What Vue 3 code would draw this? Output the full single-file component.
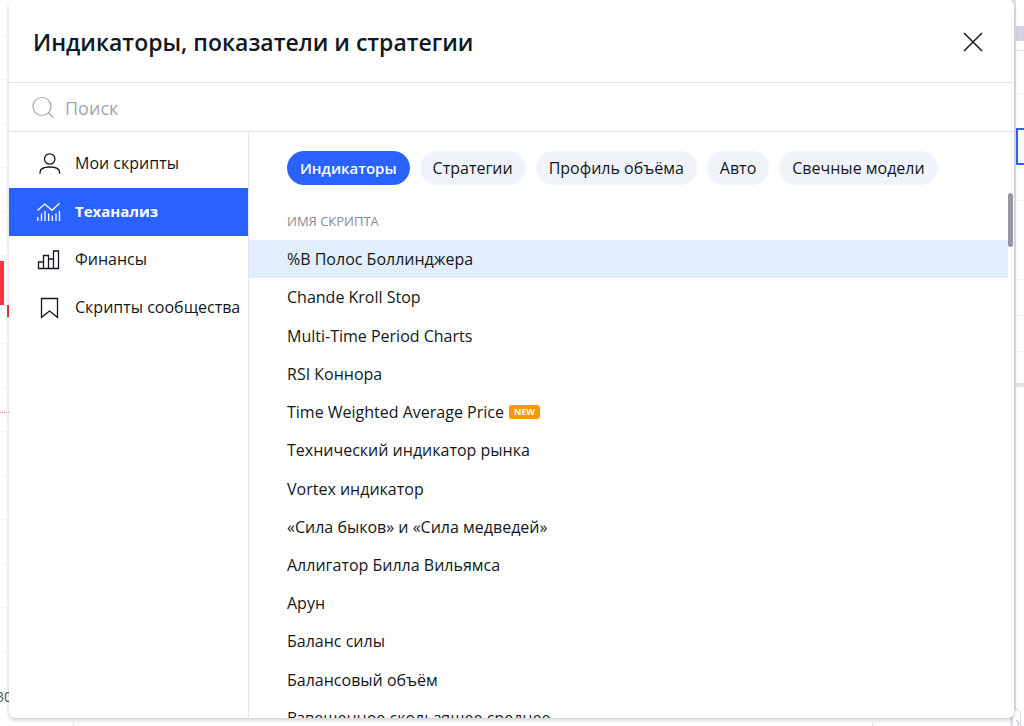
<script setup>
import { ref } from 'vue'

const query = ref('')
const active = ref(1)
const activeTab = ref(0)
const sections = [
  { label: 'Мои скрипты', icon: 'user' },
  { label: 'Теханализ', icon: 'chart' },
  { label: 'Финансы', icon: 'bars' },
  { label: 'Скрипты сообщества', icon: 'bookmark' }
]
const tabs = ['Индикаторы', 'Стратегии', 'Профиль объёма', 'Авто', 'Свечные модели']
const scripts = [
  { name: '%B Полос Боллинджера' },
  { name: 'Chande Kroll Stop' },
  { name: 'Multi-Time Period Charts' },
  { name: 'RSI Коннора' },
  { name: 'Time Weighted Average Price', badge: 'NEW' },
  { name: 'Технический индикатор рынка' },
  { name: 'Vortex индикатор' },
  { name: '«Сила быков» и «Сила медведей»' },
  { name: 'Аллигатор Билла Вильямса' },
  { name: 'Арун' },
  { name: 'Баланс силы' },
  { name: 'Балансовый объём' },
  { name: 'Взвешенное скользящее среднее' }
]
</script>

<template>
  <div class="page">
    <div class="backdrop" aria-hidden="true">
      <span class="candle tall"></span>
      <span class="candle small"></span>
      <span class="price-line"></span>
      <span class="axis-label">30</span>
      <span class="tick tick-a"></span>
      <span class="tick tick-b"></span>
      <div class="panel">
        <span class="toolbar"></span>
        <span class="rule rule-a"></span>
        <span class="rule rule-b"></span>
        <span class="selected"></span>
        <span class="rule rule-c"></span>
        <span class="rule rule-d"></span>
        <span class="rule rule-e"></span>
        <span class="rule rule-f"></span>
        <span class="splitter"></span>
        <span class="handle"></span>
        <svg class="arrow" width="4" height="10" viewBox="0 0 4 10"><path d="M0.500 1l2.500 4-2.500 4" /></svg>
      </div>
    </div>

    <section class="dialog" role="dialog" aria-labelledby="dialog-title">
      <header class="head">
        <h1 id="dialog-title">Индикаторы, показатели и стратегии</h1>
        <button class="close" type="button" aria-label="Закрыть">
          <svg width="20" height="20" viewBox="0 0 20 20"><path d="M1 1l18 18M19 1L1 19" /></svg>
        </button>
      </header>

      <label class="search">
        <svg width="24" height="24" viewBox="0 0 24 24"><circle cx="11" cy="10.500" r="9" /><path d="M17.300 16.800l5 4.700" /></svg>
        <input v-model="query" type="text" placeholder="Поиск" aria-label="Поиск" />
      </label>

      <div class="body">
        <nav class="side">
          <button v-for="(s, i) in sections" :key="s.label" type="button" class="section" :class="{ on: active === i }" @click="active = i">
            <svg width="28" height="28" viewBox="0 0 28 28">
              <template v-if="s.icon === 'user'">
                <circle cx="15.700" cy="10" r="5.200" />
                <path d="M6 24.700v-1c0-3.800 3.300-5.700 9.700-5.700s10 1.900 10 5.700v1" />
              </template>
              <path v-else-if="s.icon === 'chart'" d="M3.500 13.500l7.200-6.500 7.300 6.300 7.500-7M3.800 20v4M7.500 16.500v7.500M11 14v10M14.700 16.500v7.500M18.300 18.500v5.500M22 16.500v7.500M25.500 14v10" />
              <path v-else-if="s.icon === 'bars'" d="M4.500 23.500v-6.500h5v6.500zM9.500 23.500v-13h5v13zM14.500 23.500v-9.500h5v9.500zM19.500 23.500v-17.500h5v17.500z" />
              <path v-else d="M7.500 5.500h16v18.800l-8-6.300-8 6.300z" />
            </svg>
            <span>{{ s.label }}</span>
          </button>
        </nav>

        <main class="content">
          <div class="tabs">
            <button v-for="(t, i) in tabs" :key="t" type="button" class="tab" :class="{ on: activeTab === i }" @click="activeTab = i">{{ t }}</button>
          </div>
          <h2 class="caption">Имя скрипта</h2>
          <ul class="list">
            <li v-for="(s, i) in scripts" :key="s.name" class="row" :class="{ hover: i === 0 }">
              <span>{{ s.name }}</span>
              <span v-if="s.badge" class="badge">{{ s.badge }}</span>
            </li>
          </ul>
          <span class="thumb"></span>
        </main>
      </div>
    </section>
  </div>
</template>

<style>
body {
  margin: 0;
  background: #fff;
}
</style>

<style scoped>
* {
  box-sizing: border-box;
}
.page {
  position: relative;
  display: flex;
  height: 100vh;
  padding: 0 10px 8px 9px;
  overflow: hidden;
  font-family: "Open Sans", "Noto Sans", sans-serif;
  font-size: 16px;
  color: #131722;
}
button {
  margin: 0;
  border: 0;
  background: none;
  font: inherit;
  color: inherit;
  cursor: pointer;
}
svg {
  flex: none;
  fill: none;
  stroke: currentColor;
}
.backdrop {
  position: absolute;
  inset: 0;
  background: repeating-linear-gradient(#fff 0 35px, #f2f3f5 35px 36px, #fff 36px 44px);
}
.backdrop span {
  position: absolute;
}
.candle {
  background: #f7313f;
}
.tall {
  left: 0;
  top: 261px;
  width: 4px;
  height: 44px;
}
.small {
  left: 7px;
  top: 305px;
  width: 2px;
  height: 12px;
}
.price-line {
  left: 0;
  top: 412px;
  width: 9px;
  border-top: 1px dotted #fa8a92;
}
.axis-label {
  left: -4px;
  top: 688px;
  font-size: 14px;
  line-height: 18px;
  color: #50535e;
}
.tick {
  top: 723px;
  width: 1px;
  height: 3px;
  background: #e0e3eb;
}
.tick-a {
  left: 73px;
}
.tick-b {
  left: 872px;
}
.panel {
  position: absolute;
  inset: 0 0 0 auto;
  width: 14px;
  background: #fff;
  border-left: 6px solid #dfe1eb;
}
.panel span {
  left: 0;
  right: 0;
}
.toolbar {
  top: 26px;
  height: 15px;
  background: #d1d4de;
}
.rule {
  height: 1px;
  background: #eef0f5;
}
.rule-a { top: 50px; background: #e0e3eb; }
.rule-b { top: 93px; }
.rule-c { top: 200px; }
.rule-d { top: 279px; }
.rule-e { top: 315px; }
.rule-f { top: 351px; }
.selected {
  top: 128px;
  height: 37px;
  border: 2px solid #2962ff;
  border-right: 0;
}
.splitter {
  top: 383px;
  height: 4px;
  background: #e0e3eb;
}
.panel .handle {
  top: 709px;
  left: -4px;
  right: 3px;
  height: 24px;
  border: 1px solid #dcdfe8;
  border-radius: 4px;
  background: #fff;
}
.arrow {
  position: absolute;
  top: 719px;
  left: 0;
  color: #9db8c0;
}
.dialog {
  position: relative;
  display: flex;
  flex: 1;
  flex-direction: column;
  min-width: 0;
  overflow: hidden;
  border-radius: 6px;
  background: #fff;
  box-shadow: 0 2px 4px rgba(0, 0, 0, 0.2);
}
.head {
  display: flex;
  flex: none;
  align-items: center;
  justify-content: space-between;
  height: 83px;
  padding: 1px 31px 0 24px;
  border-bottom: 1px solid #e0e3eb;
}
h1 {
  margin: 0;
  font-size: 23px;
  line-height: 32px;
  font-weight: 600;
}
.close {
  display: flex;
  padding: 0;
}
.close svg {
  stroke-width: 1.5;
}
.search {
  display: flex;
  flex: none;
  align-items: center;
  gap: 10px;
  height: 49px;
  padding: 2px 22px 0;
  border-bottom: 1px solid #e0e3eb;
  color: #a3a6af;
}
.search svg {
  stroke-width: 1.2;
}
.search input {
  flex: 1;
  min-width: 0;
  padding: 0;
  border: 0;
  outline: 0;
  background: none;
  font: inherit;
  font-size: 18px;
  color: #131722;
}
.search input::placeholder {
  color: #a3a6af;
  opacity: 1;
}
.body {
  display: flex;
  flex: 1;
  min-height: 0;
}
.side {
  flex: none;
  width: 240px;
  padding-top: 8px;
  border-right: 1px solid #e0e3eb;
}
.section {
  display: flex;
  align-items: center;
  gap: 13px;
  width: 100%;
  height: 48px;
  padding: 0 0 2px 25px;
  text-align: left;
  white-space: nowrap;
}
.section svg {
  stroke-width: 1.3;
}
.section.on {
  background: #2962ff;
  color: #fff;
  font-size: 15px;
  font-weight: 700;
}
.content {
  position: relative;
  display: flex;
  flex: 1;
  flex-direction: column;
  min-width: 0;
  padding: 19px 6px 0 0;
}
.tabs {
  display: flex;
  flex: none;
  gap: 10px;
  padding-left: 38px;
}
.tab {
  height: 34px;
  padding: 0 13px 1px;
  border-radius: 17px;
  background: #f0f3fa;
  white-space: nowrap;
}
.tab.on {
  background: #2962ff;
  color: #fff;
  font-size: 15px;
  font-weight: 600;
}
.caption {
  flex: none;
  margin: 26px 0 9px;
  padding-left: 38px;
  font-size: 13px;
  line-height: 20px;
  font-weight: 400;
  text-transform: uppercase;
  color: #868993;
}
.list {
  display: grid;
  flex: 1;
  grid-auto-rows: 8%;
  min-height: 0;
  margin: 0;
  padding: 0;
  overflow: hidden;
  list-style: none;
}
.row {
  display: flex;
  align-items: center;
  gap: 5px;
  padding-left: 38px;
  white-space: nowrap;
}
.row.hover {
  background: #e1eefc;
}
.badge {
  padding: 0 5px;
  border-radius: 3px;
  background: #ff9800;
  color: #fff;
  font-size: 9px;
  line-height: 14px;
  font-weight: 700;
}
.thumb {
  position: absolute;
  top: 61px;
  right: 1px;
  width: 5px;
  height: 54px;
  border-radius: 3px;
  background: #9598a1;
}
</style>
